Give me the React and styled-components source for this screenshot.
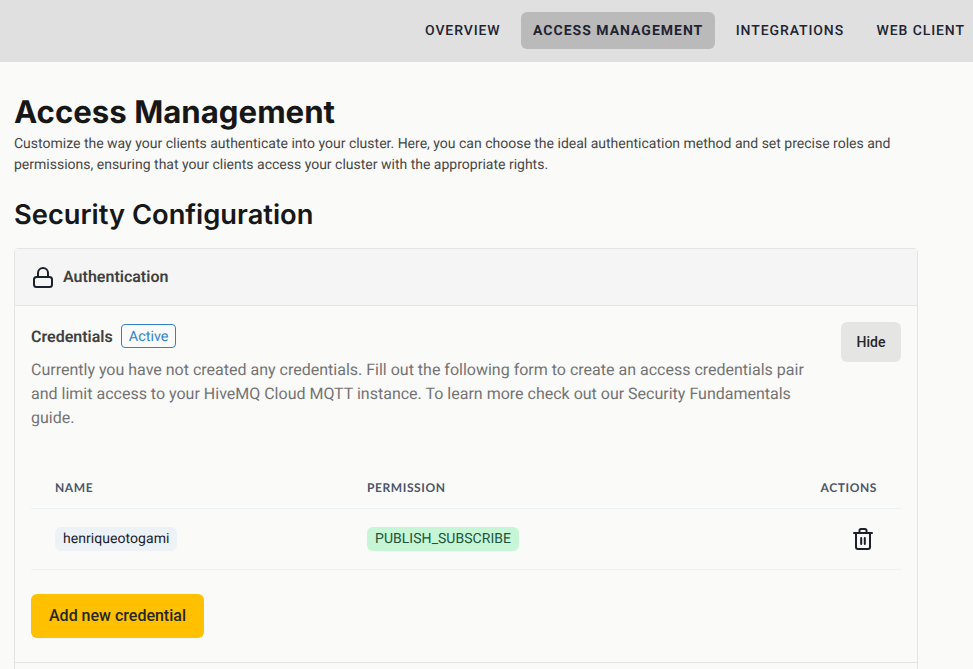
import React from "react";
import styled, { createGlobalStyle } from "styled-components";

const Global = createGlobalStyle`
  html, body { margin: 0; padding: 0; height: 100%; overflow: hidden; background: #fafaf9; }
  body { font-family: Roboto, "Liberation Sans", sans-serif; text-rendering: geometricPrecision; }
  * { box-sizing: border-box; }
`;

const Page = styled.div`
  width: 973px;
  height: 669px;
  overflow: hidden;
  background: #fafaf9;
`;

const TopBar = styled.nav`
  height: 62px;
  background: #e0e0e0;
  display: flex;
  align-items: center;
  gap: 8.5px;
  padding: 0 0 1px 413px;
  width: 985px;
`;

const NavItem = styled.a`
  flex: none;
  height: 37px;
  padding: 0 12px;
  display: flex;
  align-items: center;
  border-radius: 6px;
  font-size: 14px;
  font-weight: ${(p) => (p.$active ? 700 : 500)};
  letter-spacing: ${(p) => (p.$active ? "1px" : "0.9px")};
  color: #1f2433;
  background: ${(p) => (p.$active ? "#bababa" : "transparent")};
`;

const Main = styled.main`
  padding: 32px 55px 0 14px;
`;

const Title = styled.h1`
  margin: 0;
  font-family: Inter, sans-serif;
  font-size: 31.2px;
  line-height: 36px;
  font-weight: 700;
  color: #171717;
`;

const Intro = styled.p`
  margin: 4px 0 0;
  font-size: 14px;
  line-height: 21px;
  color: #474747;
`;

const Subtitle = styled.h2`
  margin: 21px 0 0;
  font-family: Inter, sans-serif;
  font-size: 27.3px;
  line-height: 36px;
  font-weight: 600;
  color: #171717;
`;

const Card = styled.section`
  margin-top: 15px;
  border: 1px solid #e4e4e2;
  border-radius: 4px 4px 0 0;
`;

const CardHeader = styled.header`
  height: 57px;
  background: #f5f5f5;
  border-bottom: 1px solid #e4e4e2;
  display: flex;
  align-items: center;
  gap: 8px;
  padding-left: 16px;
`;

const CardTitle = styled.span`
  padding-bottom: 2px;
  font-size: 16px;
  font-weight: 600;
  color: #404040;
`;

const CardBody = styled.div`
  padding: 16px 16px 24px;
  border-bottom: 1px solid #e4e4e2;
`;

const Lead = styled.div`
  display: flex;
  justify-content: space-between;
  align-items: flex-start;
  gap: 30px;
`;

const LeadText = styled.div`
  width: 780px;
`;

const Heading = styled.div`
  display: flex;
  align-items: center;
  gap: 8px;
  height: 24px;
  margin-top: 2px;
  font-size: 16px;
  font-weight: 600;
  color: #404040;
`;

const ActiveBadge = styled.span`
  height: 24px;
  padding: 0 7px;
  display: flex;
  align-items: center;
  border: 1px solid #3182ce;
  border-radius: 4px;
  font-size: 14.4px;
  font-weight: 400;
  color: #3182ce;
`;

const Description = styled.p`
  margin: 10px 0 0;
  font-size: 16px;
  line-height: 24px;
  color: #737373;
`;

const HideButton = styled.button`
  flex: none;
  width: 60px;
  height: 40px;
  border: 0;
  border-radius: 6px;
  background: #e5e5e3;
  font-family: inherit;
  font-size: 14px;
  font-weight: 500;
  color: #262626;
`;

const Table = styled.table`
  width: 100%;
  margin-top: 37px;
  border-collapse: collapse;
  table-layout: fixed;
`;

const Th = styled.th`
  height: 41px;
  padding: 0 24px;
  text-align: ${(p) => p.$align || "left"};
  width: ${(p) => p.$width || "auto"};
  border-bottom: 1px solid #edf2f7;
  font-family: Lato, sans-serif;
  font-size: 12px;
  font-weight: 700;
  letter-spacing: 0.6px;
  color: #4a5568;
`;

const Td = styled.td`
  height: 61px;
  padding: 0 24px;
  text-align: ${(p) => p.$align || "left"};
  border-bottom: 1px solid #edf2f7;
`;

const Pill = styled.span`
  display: inline-block;
  height: 24px;
  padding: 0 8px;
  border-radius: 6px;
  font-size: 14px;
  line-height: 24px;
  letter-spacing: 0.05px;
  background: ${(p) => (p.$green ? "#c6f6d5" : "#edf2f7")};
  color: ${(p) => (p.$green ? "#22543d" : "#1a202c")};
`;

const IconButton = styled.span`
  display: inline-flex;
  margin-right: 2px;
  vertical-align: middle;
`;

const AddButton = styled.button`
  display: block;
  margin-top: 24px;
  width: 173px;
  height: 44px;
  border: 0;
  border-radius: 6px;
  background: #ffc000;
  font-family: inherit;
  font-size: 16px;
  font-weight: 500;
  color: #262626;
`;

const NextSection = styled.div`
  height: 20px;
`;

const LockIcon = () => (
  <svg width="24" height="24" viewBox="0 0 24 24" fill="none" stroke="#1a202c" strokeWidth="2" strokeLinecap="round" strokeLinejoin="round">
    <rect x="3" y="12" width="18" height="10" rx="2.5" />
    <path d="M7 12V8a5 5 0 0 1 10 0v4" />
  </svg>
);

const TrashIcon = () => (
  <svg width="24" height="24" viewBox="0 0 24 24" fill="none" stroke="#1a202c" strokeWidth="2" strokeLinecap="round" strokeLinejoin="round">
    <path d="M3 6h18" />
    <path d="M8.5 6V3.5A1.5 1.5 0 0 1 10 2h4a1.5 1.5 0 0 1 1.5 1.5V6" />
    <path d="M5 6v14a2 2 0 0 0 2 2h10a2 2 0 0 0 2-2V6" />
    <path d="M10.2 11v6M13.8 11v6" />
  </svg>
);

export default function App() {
  return (
    <Page>
      <Global />
      <TopBar>
        <NavItem>OVERVIEW</NavItem>
        <NavItem $active>ACCESS MANAGEMENT</NavItem>
        <NavItem>INTEGRATIONS</NavItem>
        <NavItem>WEB CLIENT</NavItem>
      </TopBar>
      <Main>
        <Title>Access Management</Title>
        <Intro>
          Customize the way your clients authenticate into your cluster. Here, you can choose the ideal authentication method and set precise roles and permissions, ensuring that your clients access your cluster with the appropriate rights.
        </Intro>
        <Subtitle>Security Configuration</Subtitle>
        <Card>
          <CardHeader>
            <LockIcon />
            <CardTitle>Authentication</CardTitle>
          </CardHeader>
          <CardBody>
            <Lead>
              <LeadText>
                <Heading>
                  Credentials
                  <ActiveBadge>Active</ActiveBadge>
                </Heading>
                <Description>
                  Currently you have not created any credentials. Fill out the following form to create an access credentials pair and limit access to your HiveMQ Cloud MQTT instance. To learn more check out our Security Fundamentals guide.
                </Description>
              </LeadText>
              <HideButton>Hide</HideButton>
            </Lead>
            <Table>
              <thead>
                <tr>
                  <Th $width="312px">NAME</Th>
                  <Th>PERMISSION</Th>
                  <Th $align="right" $width="150px">ACTIONS</Th>
                </tr>
              </thead>
              <tbody>
                <tr>
                  <Td><Pill>henriqueotogami</Pill></Td>
                  <Td><Pill $green>PUBLISH_SUBSCRIBE</Pill></Td>
                  <Td $align="right"><IconButton><TrashIcon /></IconButton></Td>
                </tr>
              </tbody>
            </Table>
            <AddButton>Add new credential</AddButton>
          </CardBody>
          <NextSection />
        </Card>
      </Main>
    </Page>
  );
}
